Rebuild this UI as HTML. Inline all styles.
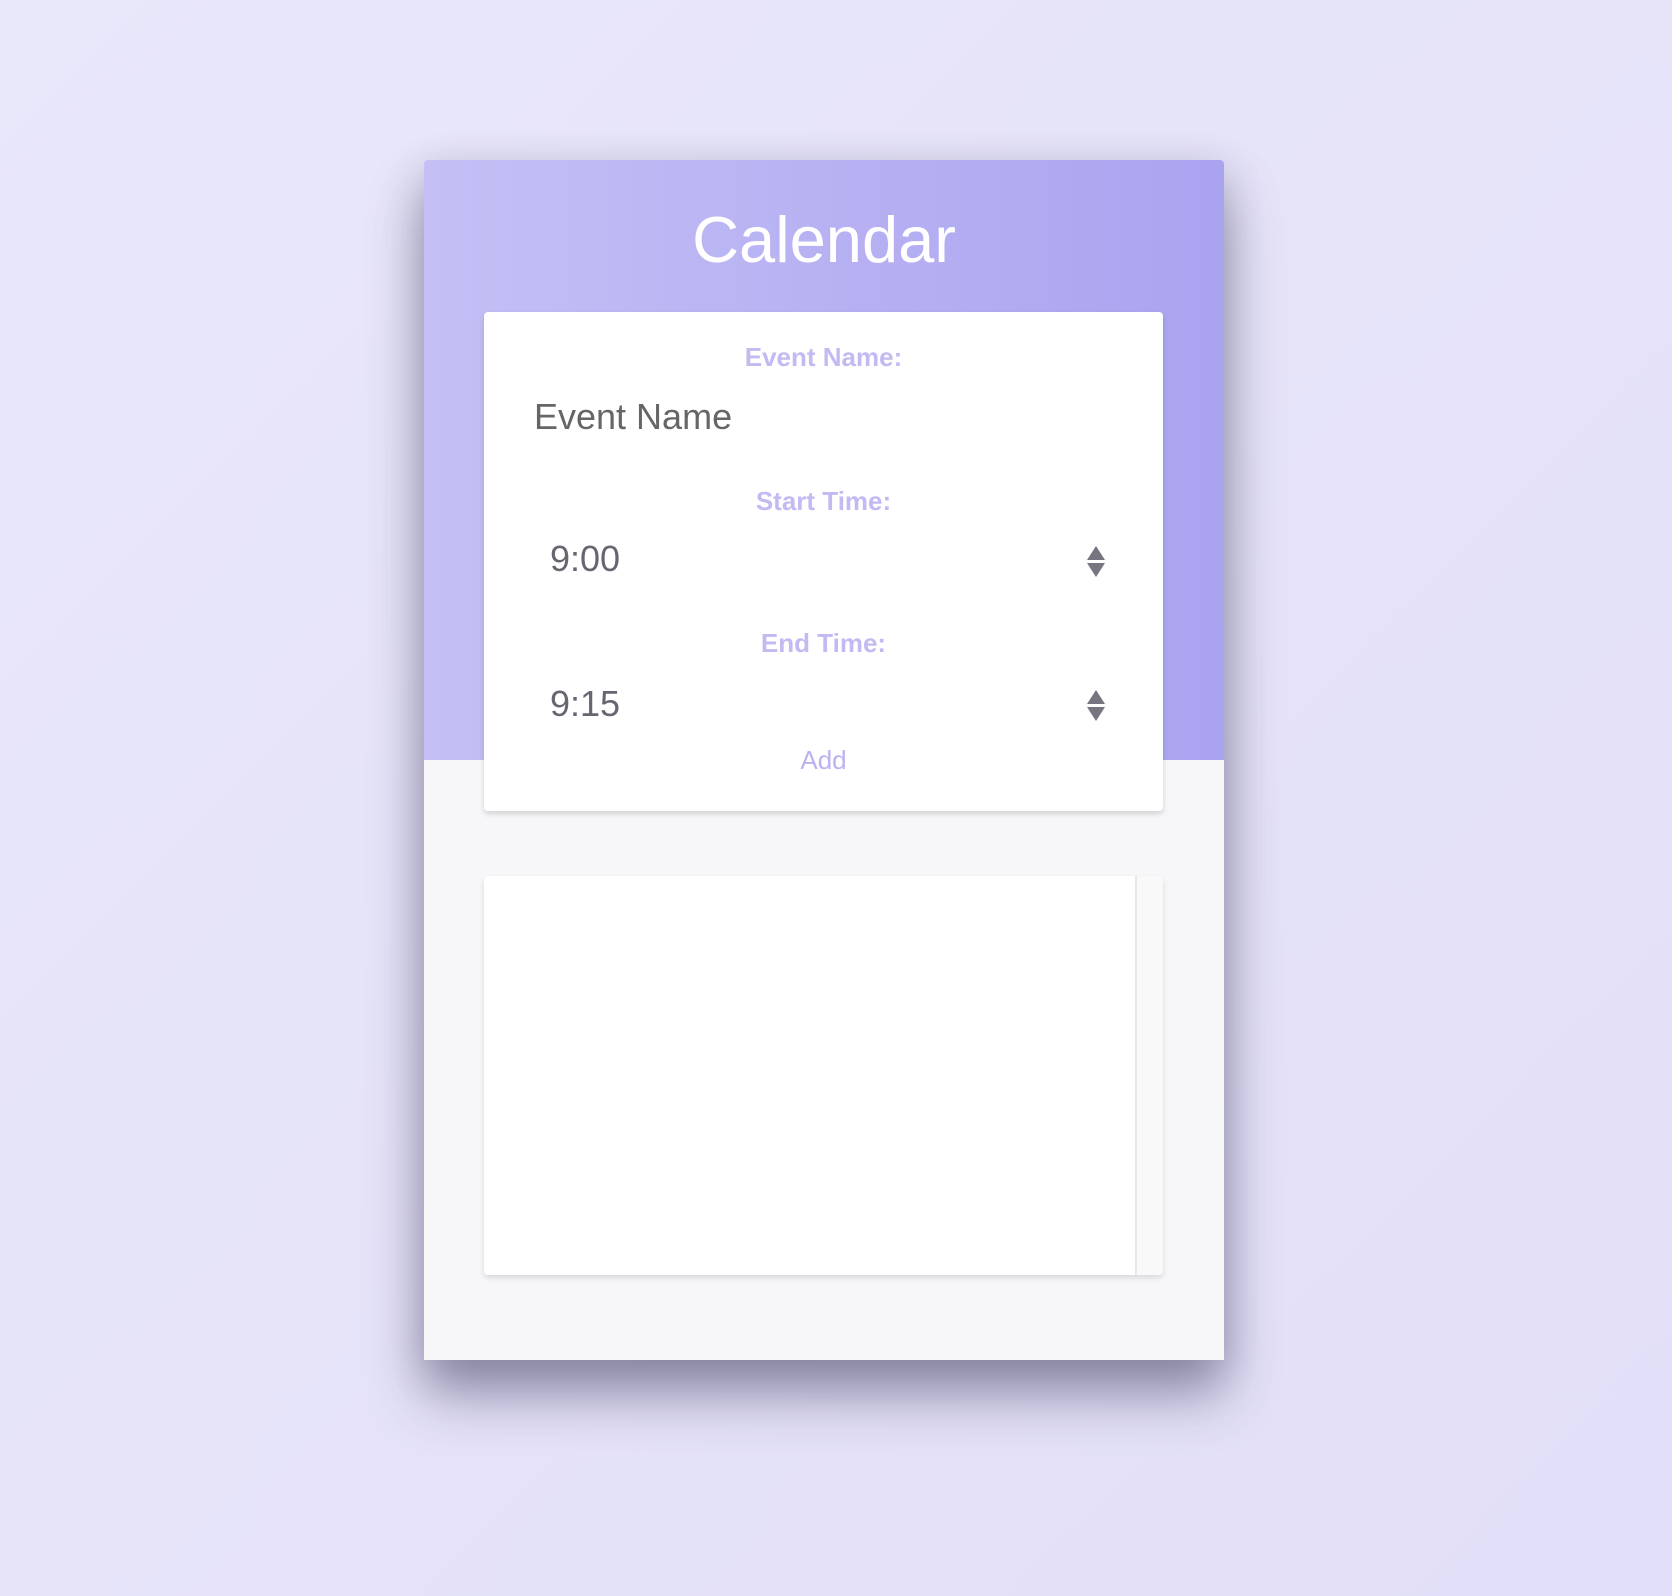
<!DOCTYPE html>
<html><head><style>
html,body{margin:0;padding:0}
body{width:1672px;height:1596px;background:linear-gradient(135deg,#e9e7fa,#e2dff8);font-family:"Liberation Sans",sans-serif;position:relative;overflow:hidden}
.card{position:absolute;left:424px;top:160px;width:800px;height:1200px;background:#f7f7f9;box-shadow:0 35px 55px rgba(50,50,80,.45),0 10px 40px rgba(60,60,90,.2);border-radius:4px 4px 0 0;overflow:hidden}
.hdr{position:absolute;left:0;top:0;width:800px;height:600px;background:linear-gradient(90deg,#c4c0f5,#aaa3f0)}
.title{position:absolute;left:0;width:800px;top:40px;text-align:center;color:#fff;font-size:65px;line-height:80px}
.form{position:absolute;left:484px;top:312px;width:679px;height:499px;background:#fff;border-radius:4px;box-shadow:0 3px 6px rgba(0,0,0,.15)}
.lbl{position:absolute;left:0;width:679px;text-align:center;color:#c2baf2;font-weight:bold;font-size:26px;line-height:30px}
.val{position:absolute;color:#666670;font-size:36px;line-height:40px}
.arr{position:absolute;left:603px;width:0;height:0;border-left:9px solid transparent;border-right:9px solid transparent}
.list{position:absolute;left:484px;top:876px;width:679px;height:399px;background:#fff;border-radius:4px;box-shadow:0 3px 6px rgba(0,0,0,.12);overflow:hidden}
.sb{position:absolute;left:651px;top:0;width:28px;height:399px;background:#f9f9f9;border-left:2px solid #e8e8e8}
</style></head><body>
<div class="card"><div class="hdr"><div class="title">Calendar</div></div></div>
<div class="form">
<div class="lbl" style="top:30px">Event Name:</div>
<div class="val" style="left:50px;top:85px;color:#666">Event Name</div>
<div class="lbl" style="top:174px">Start Time:</div>
<div class="val" style="left:66px;top:227px">9:00</div>
<div class="arr" style="top:234px;border-bottom:14px solid #77757f"></div>
<div class="arr" style="top:251px;border-top:14px solid #77757f"></div>
<div class="lbl" style="top:316px">End Time:</div>
<div class="val" style="left:66px;top:372px">9:15</div>
<div class="arr" style="top:378px;border-bottom:14px solid #77757f"></div>
<div class="arr" style="top:395px;border-top:14px solid #77757f"></div>
<div class="lbl" style="top:433px;font-weight:normal;color:#bab3f0">Add</div>
</div>
<div class="list"><div class="sb"></div></div>
</body></html>
